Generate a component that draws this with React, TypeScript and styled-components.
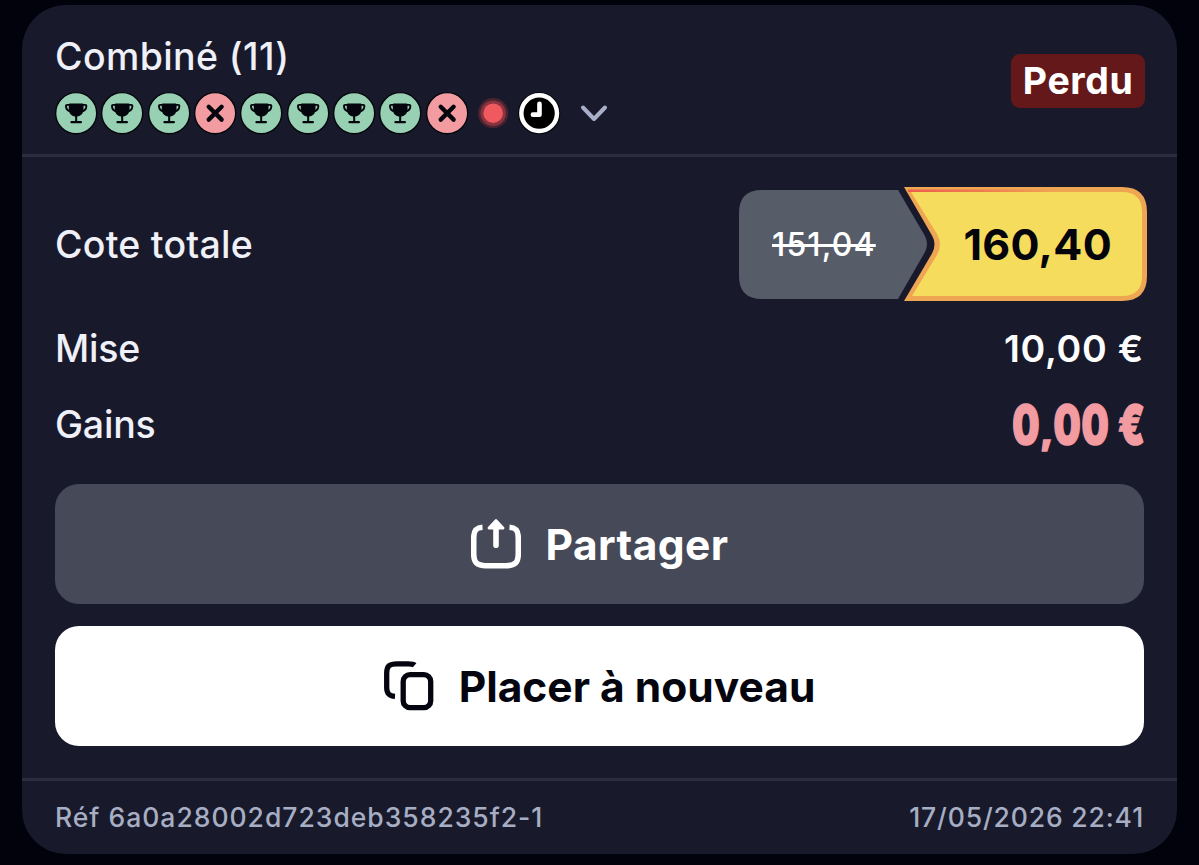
import React from 'react';
import styled, { createGlobalStyle } from 'styled-components';

type Status = 'won' | 'lost' | 'live' | 'pending';

const SELECTIONS: Status[] = [
  'won',
  'won',
  'won',
  'lost',
  'won',
  'won',
  'won',
  'won',
  'lost',
  'live',
  'pending',
];

function StatusIcon({ status }: { status: Status }) {
  if (status === 'live')
    return (
      <Icon viewBox="0 0 46 46">
        <circle cx="23" cy="23" r="15" fill="#4b222f" />
        <circle cx="23" cy="23" r="12.6" fill="#8a3440" />
        <circle cx="23" cy="23" r="9.7" fill="#f05a5f" />
      </Icon>
    );

  if (status === 'pending')
    return (
      <Icon viewBox="0 0 46 46">
        <circle cx="23" cy="23" r="21" fill="#05060c" />
        <circle cx="23" cy="23" r="17.7" fill="#000" stroke="#fff" strokeWidth="4.4" />
        <path
          d="M23.3 13.8V24.5H16.8"
          fill="none"
          stroke="#fff"
          strokeWidth="4.6"
          strokeLinecap="round"
          strokeLinejoin="round"
        />
      </Icon>
    );

  return (
    <Icon viewBox="0 0 46 46">
      <circle
        cx="23"
        cy="23"
        r="20.4"
        fill={status === 'won' ? '#98d0b3' : '#f29ba1'}
        stroke="#05060c"
        strokeWidth="1.4"
      />
      {status === 'won' ? (
        <>
          <path
            d="M16.5 14.8H14.2Q12.8 14.8 12.9 16.2Q13.2 20.6 17.6 21.2M29.5 14.8H31.8Q33.2 14.8 33.1 16.2Q32.8 20.6 28.4 21.2"
            fill="none"
            stroke="#04050d"
            strokeWidth="1.9"
          />
          <path
            d="M15.7 14.4Q15.7 13.4 16.7 13.4H29.3Q30.3 13.4 30.3 14.4V19C30.3 23 27.8 25.6 24 26.2V30.8H27.6Q28.8 30.8 28.8 31.9T27.6 33H18.4Q17.2 33 17.2 31.9T18.4 30.8H22V26.2C18.2 25.6 15.7 23 15.7 19Z"
            fill="#04050d"
          />
        </>
      ) : (
        <path
          d="M16.6 16.6L29.4 29.4M29.4 16.6L16.6 29.4"
          fill="none"
          stroke="#04050d"
          strokeWidth="4.3"
          strokeLinecap="round"
        />
      )}
    </Icon>
  );
}

function ShareIcon() {
  return (
    <ButtonIcon viewBox="0 0 50 50">
      <path
        d="M11.5 8.2C4.5 8.6 2.7 12 2.7 19V34C2.7 44 6 46.7 15 46.7H35C44 46.7 47.3 44 47.3 34V19C47.3 12 45.5 8.6 38.5 8.2"
        fill="none"
        stroke="#fff"
        strokeWidth="5.6"
      />
      <path d="M25 10V26.3" stroke="#fff" strokeWidth="5.6" strokeLinecap="round" />
      <path
        d="M25 1.8L31.8 9H18.2Z"
        fill="#fff"
        stroke="#fff"
        strokeWidth="3.2"
        strokeLinejoin="round"
      />
    </ButtonIcon>
  );
}

function CopyIcon() {
  return (
    <ButtonIcon viewBox="0 0 50 50">
      <path
        d="M11 35.4C4.8 35 2.7 32.5 2.7 26.5V12C2.7 5 5.4 2.9 13 2.9H24C27.5 2.9 29.5 3.2 30.6 4.2"
        fill="none"
        stroke="#04050f"
        strokeWidth="5.3"
      />
      <rect
        x="19.2"
        y="13.7"
        width="27.5"
        height="33"
        rx="6.8"
        fill="none"
        stroke="#04050f"
        strokeWidth="5.3"
      />
    </ButtonIcon>
  );
}

export default function App() {
  return (
    <>
      <GlobalStyle />
      <Card>
        <Header>
          <div>
            <Title>Combiné (11)</Title>
            <Selections>
              {SELECTIONS.map((status, idx) => (
                <StatusIcon key={idx} status={status} />
              ))}
              <Chevron viewBox="0 0 30 20">
                <path
                  d="M4 4.5L15 16L26 4.5"
                  fill="none"
                  stroke="#a9afc8"
                  strokeWidth="4"
                  strokeLinecap="round"
                  strokeLinejoin="round"
                />
              </Chevron>
            </Selections>
          </div>
          <ResultBadge>Perdu</ResultBadge>
        </Header>

        <Body>
          <OddsRow>
            <Label $spacing={0.25}>Cote totale</Label>
            <Odds>
              <OddsShape viewBox="0 0 410 116">
                <defs>
                  <linearGradient id="glow" x1="0" x2="1">
                    <stop offset="0" stopColor="#ec5f4d" />
                    <stop offset="0.5" stopColor="#ee7d50" />
                    <stop offset="1" stopColor="#f0a653" />
                  </linearGradient>
                </defs>
                <path
                  d="M24 4H160L187 50Q191 58.5 187 66L160 113H24Q1 113 1 90V27Q1 4 24 4Z"
                  fill="#575c69"
                />
                <path
                  d="M166 1H384Q409 1 409 26V90Q409 115 384 115H166L194 67.5Q199 58 194 49.5Z"
                  fill="#efa653"
                />
                <path
                  d="M173 6H384Q404 6 404 26V90Q404 110 384 110H174L199 69Q205 58 199 48Z"
                  fill="#f6dc5c"
                />
                <rect x="170" y="3.5" width="150" height="2.5" fill="url(#glow)" />
              </OddsShape>
              <OldOdds>151,04</OldOdds>
              <NewOdds>160,40</NewOdds>
            </Odds>
          </OddsRow>
          <StakeRow>
            <Label>Mise</Label>
            <Stake>10,00 €</Stake>
          </StakeRow>
          <GainsRow>
            <Label>Gains</Label>
            <Gains>
              0<Comma>,</Comma>00 €
            </Gains>
          </GainsRow>

          <Actions>
            <Button>
              <ShareIcon />
              <ButtonText $spacing={0.4}>Partager</ButtonText>
            </Button>
            <Button $primary>
              <CopyIcon />
              <ButtonText>Placer à nouveau</ButtonText>
            </Button>
          </Actions>
        </Body>

        <Footer>
          <Reference>Réf 6a0a28002d723deb358235f2-1</Reference>
          <DateText>17/05/2026 22:41</DateText>
        </Footer>
      </Card>
    </>
  );
}

const GlobalStyle = createGlobalStyle`
  * {
    box-sizing: border-box;
  }

  body {
    margin: 0;
    height: 865px;
    overflow: hidden;
    background: #02020d;
    font-family: Inter, 'Liberation Sans', sans-serif;
    font-optical-sizing: none;
  }
`;

const Card = styled.div`
  display: flex;
  flex-direction: column;
  width: 1155px;
  height: 849px;
  margin: 5px 0 0 22px;
  border-radius: 44px;
  background: #181a2c;
  color: #eff0f8;
  white-space: nowrap;
`;

const Header = styled.div`
  display: flex;
  justify-content: space-between;
  height: 152px;
  padding: 28px 32px 0 33px;
  border-bottom: 3px solid #2b2d3e;
`;

const Title = styled.div`
  height: 48px;
  font-size: 37.5px;
  font-weight: 450;
  line-height: 48px;
  letter-spacing: 0.4px;
`;

const Selections = styled.div`
  display: flex;
  align-items: center;
  margin: 9px 0 0 -2px;
`;

const Icon = styled.svg`
  width: 46.35px;
  height: 46.35px;
`;

const Chevron = styled.svg`
  width: 30px;
  height: 20px;
  margin-left: 16px;
`;

const ResultBadge = styled.div`
  height: 54px;
  margin-top: 21px;
  padding: 0 11.5px 0 12px;
  border-radius: 9px;
  background: #641819;
  color: #fff;
  font-size: 37.5px;
  font-weight: 700;
  line-height: 54px;
  letter-spacing: 0.6px;
`;

const Body = styled.div`
  flex: 1;
  padding: 0 33px;
`;

const Row = styled.div`
  display: flex;
  align-items: center;
  justify-content: space-between;
`;

const OddsRow = styled(Row)`
  height: 116px;
  margin-top: 29px;
`;

const StakeRow = styled(Row)`
  height: 76px;
  margin-top: 8px;
`;

const GainsRow = styled(Row)`
  height: 76px;
`;

const Label = styled.div<{ $spacing?: number }>`
  font-size: 37.5px;
  font-weight: 450;
  letter-spacing: ${({ $spacing }) => $spacing ?? -0.2}px;
`;

const Odds = styled.div`
  position: relative;
  display: flex;
  align-items: center;
  width: 410px;
  height: 116px;
  margin-right: -4px;
`;

const OddsShape = styled.svg`
  position: absolute;
  inset: 0;
`;

const OldOdds = styled.div`
  position: relative;
  width: 192px;
  padding-left: 34px;
  color: #fff;
  font-size: 32px;
  font-weight: 450;
  letter-spacing: 1.15px;
  text-decoration: line-through;
  text-decoration-thickness: 3px;
`;

const NewOdds = styled.div`
  position: relative;
  padding-left: 33.5px;
  color: #04040c;
  font-size: 43px;
  font-weight: 700;
  letter-spacing: 0.3px;
`;

const Stake = styled.div`
  color: #fff;
  font-size: 37.5px;
  font-weight: 600;
  letter-spacing: 0.75px;
`;

const Gains = styled.div`
  margin-right: -1px;
  color: #f29ba1;
  font-size: 54px;
  font-weight: 900;
  letter-spacing: 1px;
  transform: scaleX(0.71);
  transform-origin: right center;
  -webkit-text-stroke: 1.6px #f29ba1;
`;

const Comma = styled.span`
  display: inline-block;
  margin: 0 3px;
  font-size: 34px;
  letter-spacing: 0;
  transform: scaleX(1.4);
`;

const Actions = styled.div`
  display: flex;
  flex-direction: column;
  gap: 22px;
  margin-top: 22px;
`;

const Button = styled.button<{ $primary?: boolean }>`
  display: flex;
  align-items: center;
  justify-content: center;
  gap: 25px;
  height: 120px;
  padding: 0;
  border: none;
  border-radius: 24px;
  background: ${({ $primary }) => ($primary ? '#fff' : '#464957')};
  color: ${({ $primary }) => ($primary ? '#04050f' : '#fff')};
  font-family: inherit;
  cursor: pointer;
`;

const ButtonIcon = styled.svg`
  width: 50px;
  height: 50px;
`;

const ButtonText = styled.span<{ $spacing?: number }>`
  font-size: 42.5px;
  font-weight: 700;
  letter-spacing: ${({ $spacing }) => $spacing ?? 0}px;
`;

const Footer = styled.div`
  display: flex;
  align-items: center;
  justify-content: space-between;
  height: 76px;
  padding: 0 33px 2px;
  border-top: 3px solid #2b2d3e;
  color: #a7aec3;
  font-size: 26.5px;
  font-weight: 450;
`;

const Reference = styled.span`
  letter-spacing: 1px;
`;

const DateText = styled.span`
  letter-spacing: 0.85px;
`;
